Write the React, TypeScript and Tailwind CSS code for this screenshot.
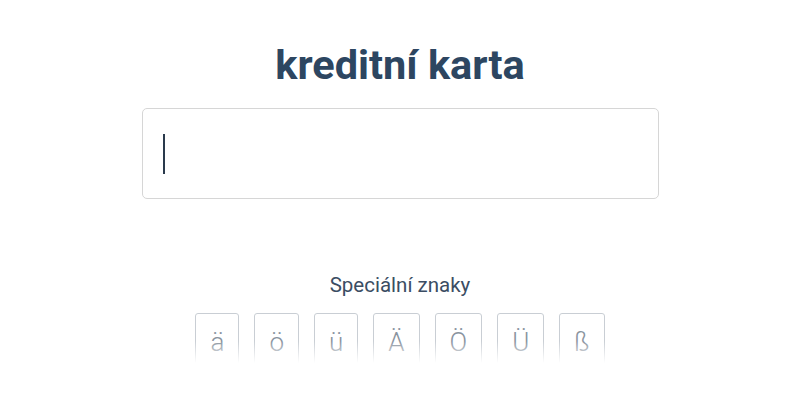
import React from "react";

const SPECIAL_CHARS = ["ä", "ö", "ü", "Ä", "Ö", "Ü", "ß"];

function App() {
  return (
    <div
      className="w-[800px] h-[400px] bg-white flex flex-col items-center overflow-hidden"
      style={{ fontFamily: "Roboto, 'Noto Sans', sans-serif" }}
    >
      {/* Title */}
      <h1 className="mt-[41px] text-[41.5px] leading-[48px] font-bold text-[#2d4661]">
        kreditní karta
      </h1>

      {/* Input */}
      <div className="mt-[19px] w-[517px] h-[91px] border border-[#d6d6d6] rounded-[5px] flex items-center pl-[20px]">
        <div className="w-[2px] h-[40px] bg-[#2a3a4c]" />
      </div>

      {/* Special characters */}
      <div className="mt-[72px] text-[20.5px] leading-[28px] text-[#3b4d63]">
        Speciální znaky
      </div>
      <div className="relative mt-[14px] h-[50px] overflow-hidden">
        <div className="flex gap-[15px]">
          {SPECIAL_CHARS.map((ch) => (
            <button
              key={ch}
              className="h-[70px] px-[14px] pt-[13px] border border-[#c9ced4] rounded-[3px] text-[26px] leading-[30px] font-light text-[#8a949f] flex items-start"
            >
              {ch}
            </button>
          ))}
        </div>
        <div className="absolute left-0 right-0 bottom-0 h-[22px] bg-gradient-to-b from-white/0 to-white" />
      </div>
    </div>
  );
}

export default App;
